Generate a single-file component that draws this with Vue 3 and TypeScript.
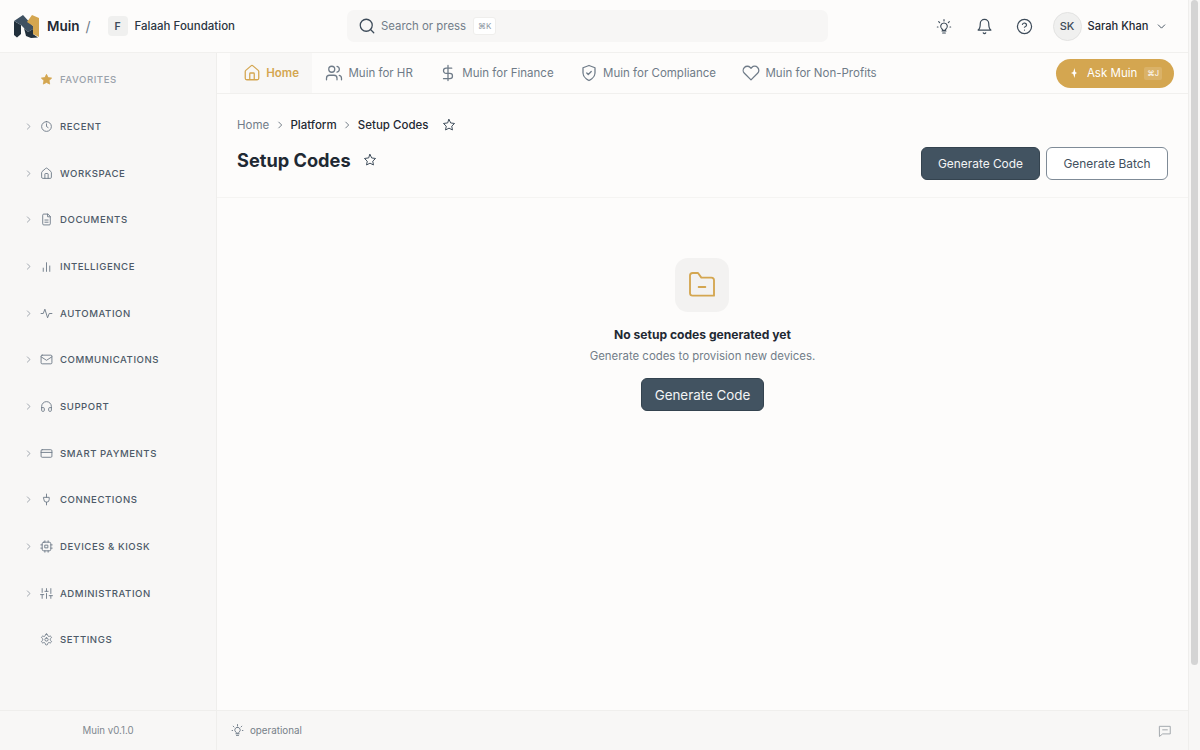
<script setup lang="ts">
const navItems = [
  { label: "RECENT", icon: "clock", arrow: true },
  { label: "WORKSPACE", icon: "home", arrow: true },
  { label: "DOCUMENTS", icon: "doc", arrow: true },
  { label: "INTELLIGENCE", icon: "bars", arrow: true },
  { label: "AUTOMATION", icon: "pulse", arrow: true },
  { label: "COMMUNICATIONS", icon: "mail", arrow: true },
  { label: "SUPPORT", icon: "headset", arrow: true },
  { label: "SMART PAYMENTS", icon: "card", arrow: true },
  { label: "CONNECTIONS", icon: "plug", arrow: true },
  { label: "DEVICES & KIOSK", icon: "chip", arrow: true },
  { label: "ADMINISTRATION", icon: "sliders", arrow: true },
  { label: "SETTINGS", icon: "gear", arrow: false },
]

const homePath = "M15 21v-8a1 1 0 0 0-1-1h-4a1 1 0 0 0-1 1v8M3 10a2 2 0 0 1 .7-1.500l7-6a2 2 0 0 1 2.600 0l7 6A2 2 0 0 1 21 10v9a2 2 0 0 1-2 2H5a2 2 0 0 1-2-2z"
const bulbPath = "M9 18h6M10 21h4M12 6a5 5 0 0 0-3 9c.6.500 1 1 1 2h4c0-1 .4-1.500 1-2a5 5 0 0 0-3-9zM12 1v2M4 4l1.500 1.500M20 4l-1.500 1.500M2 12h1M21 12h1"
const starPath = "M12 2.500l2.900 6 6.600.9-4.800 4.600 1.200 6.500L12 17.400l-5.900 3.100 1.200-6.500L2.500 9.400l6.600-.9z"

const icons: Record<string, string> = {
  clock: "M12 3a9 9 0 1 0 0 18 9 9 0 0 0 0-18zM12 7v5l3 2",
  home: homePath,
  doc: "M14 2H7a2 2 0 0 0-2 2v16a2 2 0 0 0 2 2h10a2 2 0 0 0 2-2V7zM14 2v5h5M9 13h6M9 17h6",
  bars: "M6 21v-6M12 21V5M18 21v-10",
  pulse: "M2 12h4l3-8 5 16 3-8h5",
  mail: "M4 4h16a2 2 0 0 1 2 2v12a2 2 0 0 1-2 2H4a2 2 0 0 1-2-2V6a2 2 0 0 1 2-2zM2 7l10 6.500L22 7",
  headset: "M3 14h3a2 2 0 0 1 2 2v3a2 2 0 0 1-2 2H5a2 2 0 0 1-2-2v-7a9 9 0 0 1 18 0v7a2 2 0 0 1-2 2h-1a2 2 0 0 1-2-2v-3a2 2 0 0 1 2-2h3",
  card: "M4 5h16a2 2 0 0 1 2 2v10a2 2 0 0 1-2 2H4a2 2 0 0 1-2-2V7a2 2 0 0 1 2-2zM2 10h20",
  plug: "M12 2v6M7 8h10v4a5 5 0 0 1-10 0zM12 17v5",
  chip: "M7 4h10a3 3 0 0 1 3 3v10a3 3 0 0 1-3 3H7a3 3 0 0 1-3-3V7a3 3 0 0 1 3-3zM9.500 9.500h5v5h-5zM9 1.500V4M15 1.500V4M9 20v2.500M15 20v2.500M1.500 9H4M1.500 15H4M20 9h2.500M20 15h2.500",
  sliders: "M4 21v-7M4 10V3M12 21v-9M12 8V3M20 21v-5M20 12V3M1 14h6M9 8h6M17 16h6",
  gear: "M12.220 2h-.44a2 2 0 0 0-2 2v.18a2 2 0 0 1-1 1.730l-.43.25a2 2 0 0 1-2 0l-.15-.08a2 2 0 0 0-2.730.73l-.22.38a2 2 0 0 0 .73 2.730l.15.1a2 2 0 0 1 1 1.720v.51a2 2 0 0 1-1 1.740l-.15.09a2 2 0 0 0-.73 2.730l.22.38a2 2 0 0 0 2.730.73l.15-.08a2 2 0 0 1 2 0l.43.25a2 2 0 0 1 1 1.730V20a2 2 0 0 0 2 2h.44a2 2 0 0 0 2-2v-.18a2 2 0 0 1 1-1.730l.43-.25a2 2 0 0 1 2 0l.15.08a2 2 0 0 0 2.730-.73l.22-.39a2 2 0 0 0-.73-2.730l-.15-.08a2 2 0 0 1-1-1.740v-.5a2 2 0 0 1 1-1.740l.15-.09a2 2 0 0 0 .73-2.730l-.22-.38a2 2 0 0 0-2.730-.73l-.15.08a2 2 0 0 1-2 0l-.43-.25a2 2 0 0 1-1-1.730V4a2 2 0 0 0-2-2zM12 9a3 3 0 1 0 0 6 3 3 0 0 0 0-6z",
}

const tabs = [
  { label: "Muin for HR", icon: "M16 21v-2a4 4 0 0 0-4-4H6a4 4 0 0 0-4 4v2M9 11a4 4 0 1 0 0-8 4 4 0 0 0 0 8zM22 21v-2a4 4 0 0 0-3-3.900M16 3.100a4 4 0 0 1 0 7.800" },
  { label: "Muin for Finance", icon: "M12 2v20M17 5.500H9.500a3.500 3.500 0 0 0 0 7h5a3.500 3.500 0 0 1 0 7H6" },
  { label: "Muin for Compliance", icon: "M12 22s8-3.500 8-10V5l-8-3-8 3v7c0 6.500 8 10 8 10zM9 12l2 2 4-4" },
  { label: "Muin for Non-Profits", icon: "M20.800 4.600a5.500 5.500 0 0 0-7.800 0L12 5.700l-1-1.100a5.500 5.500 0 0 0-7.800 7.800L12 21.200l8.800-8.800a5.500 5.500 0 0 0 0-7.800z" },
]
</script>

<template>
  <div class="page">
    <div class="shell">
      <header class="topbar">
        <div class="brand">
          <svg class="logo" viewBox="0 0 25 24" width="25" height="24">
            <path d="M0 7 7 11V20L3 23.500 0 21z" fill="#22303c" />
            <path d="M0 7 9 1 19 12V15L14 18 7 11z" fill="#3f5162" />
            <path d="M10 14 14 18 19 15V20L24 23.500 17 24 12 22z" fill="#22303c" />
            <path d="M13 8 18 1 25 4V23L19 20V12z" fill="#d4a650" />
          </svg>
          <span class="brand-name">Muin</span>
          <span class="brand-slash">/</span>
          <span class="org-badge">F</span>
          <span class="org-name">Falaah Foundation</span>
        </div>
        <div class="search">
          <svg viewBox="0 0 24 24" width="18" height="18" class="stroke dark"><circle cx="11" cy="11" r="8" /><path d="m21 21-4.300-4.300" /></svg>
          <span class="search-text">Search or press</span>
          <kbd class="search-key">⌘K</kbd>
        </div>
        <div class="top-actions">
          <svg viewBox="0 0 24 24" width="16" height="16" class="stroke dark bulb"><path :d="bulbPath" /></svg>
          <svg viewBox="0 0 24 24" width="17" height="17" class="stroke dark"><path d="M6 8a6 6 0 0 1 12 0c0 7 3 9 3 9H3s3-2 3-9M10.300 21a2 2 0 0 0 3.400 0" /></svg>
          <svg viewBox="0 0 24 24" width="17" height="17" class="stroke dark"><circle cx="12" cy="12" r="10" /><path d="M9.100 9a3 3 0 0 1 5.800 1c0 2-3 3-3 3M12 17h.01" /></svg>
          <div class="user">
            <span class="avatar">SK</span>
            <span class="user-name">Sarah Khan</span>
            <svg viewBox="0 0 24 24" width="13" height="13" class="stroke dark"><path d="m6 9 6 6 6-6" /></svg>
          </div>
        </div>
      </header>

      <div class="body">
        <aside class="sidebar">
          <nav class="side-nav">
            <div class="side-item">
              <span class="arrow"></span>
              <svg class="side-icon" viewBox="0 0 24 24" width="13" height="13"><path :d="starPath" fill="#d4a650" stroke="#d4a650" stroke-width="1.500" stroke-linejoin="round" /></svg>
              <span class="side-label fav">FAVORITES</span>
            </div>
            <div v-for="item in navItems" :key="item.label" class="side-item">
              <span class="arrow">
                <svg v-if="item.arrow" viewBox="0 0 24 24" width="9" height="9" class="stroke"><path d="m9 5 7 7-7 7" /></svg>
              </span>
              <svg class="side-icon stroke" viewBox="0 0 24 24" width="13" height="13"><path :d="icons[item.icon]" /></svg>
              <span class="side-label">{{ item.label }}</span>
            </div>
          </nav>
          <div class="version">Muin v0.1.0</div>
        </aside>

        <main class="main">
          <div class="tabbar">
            <div class="tab active">
              <svg viewBox="0 0 24 24" width="18" height="18" class="stroke"><path :d="homePath" /></svg>
              <span>Home</span>
            </div>
            <div v-for="tab in tabs" :key="tab.label" class="tab">
              <svg viewBox="0 0 24 24" width="18" height="18" class="stroke"><path :d="tab.icon" /></svg>
              <span>{{ tab.label }}</span>
            </div>
            <button class="ask">
              <svg viewBox="0 0 24 24" width="12" height="12"><path d="M13 2 10.500 10 6 12l4.500 2L13 22l1.500-8L18 12l-3.500-2z" fill="#fff" /></svg>
              <span>Ask Muin</span>
              <kbd class="ask-key">⌘J</kbd>
            </button>
          </div>

          <div class="page-head">
            <div class="crumbs">
              <span class="crumb-home">Home</span>
              <svg viewBox="0 0 24 24" width="10" height="10" class="stroke dark"><path d="m9 5 7 7-7 7" /></svg>
              <span>Platform</span>
              <svg viewBox="0 0 24 24" width="10" height="10" class="stroke dark"><path d="m9 5 7 7-7 7" /></svg>
              <span>Setup Codes</span>
              <svg viewBox="0 0 24 24" width="14" height="14" class="stroke dark crumb-star"><path :d="starPath" /></svg>
            </div>
            <div class="title-row">
              <div class="title">
                <h1>Setup Codes</h1>
                <svg viewBox="0 0 24 24" width="14" height="14" class="stroke dark"><path :d="starPath" /></svg>
              </div>
              <div class="title-actions">
                <button class="btn primary">Generate Code</button>
                <button class="btn outline">Generate Batch</button>
              </div>
            </div>
          </div>

          <section class="empty">
            <div class="empty-icon">
              <svg viewBox="0 0 24 24" width="32" height="32" class="stroke gold"><path d="M5 20a2 2 0 0 1-2-2V5a2 2 0 0 1 2-2h4l2.500 3.500H19a2 2 0 0 1 2 2V20zM9.500 13.500h5" /></svg>
            </div>
            <h2>No setup codes generated yet</h2>
            <p>Generate codes to provision new devices.</p>
            <button class="btn primary large">Generate Code</button>
          </section>

          <footer class="status">
            <div class="status-left">
              <svg viewBox="0 0 24 24" width="13" height="13" class="stroke"><path :d="bulbPath" /></svg>
              <span>operational</span>
            </div>
            <svg viewBox="0 0 24 24" width="14" height="14" class="stroke faint"><path d="M3 4h18v13H8l-5 4zM8 10h8" /></svg>
          </footer>
        </main>
      </div>
    </div>
    <div class="scrollbar"><div class="thumb"></div></div>
  </div>
</template>

<style scoped>
.page { display: flex; width: 1200px; height: 750px; overflow: hidden; background: #fdfcfb; color: #1f2933; font-family: "Inter", "Noto Sans", sans-serif; }
.shell { flex: 1; min-width: 0; display: flex; flex-direction: column; }
.stroke { fill: none; stroke: #6f7b88; stroke-width: 1.7; stroke-linecap: round; stroke-linejoin: round; flex: none; }
.stroke.dark { stroke: #3d4b59; }
.stroke.faint { stroke: #a3a8ad; }
.stroke.gold { stroke: #d4a650; stroke-width: 1.4; }

.topbar { height: 53px; flex: none; display: flex; align-items: center; box-sizing: border-box; border-bottom: 1px solid #f1f0ee; }
.brand { width: 347px; flex: none; display: flex; align-items: center; padding-left: 14px; box-sizing: border-box; }
.brand-name { font-size: 13.500px; font-weight: 600; margin-left: 8px; }
.brand-slash { font-size: 14px; color: #6f7b88; margin-left: 6px; }
.org-badge { width: 20px; height: 20px; border-radius: 4px; background: #f0f0ef; display: flex; align-items: center; justify-content: center; font-size: 10.500px; font-weight: 600; color: #3d4b59; margin-left: 17px; }
.org-name { font-size: 11.500px; font-weight: 500; margin-left: 7px; color: #2b3642; }
.search { width: 481px; height: 32px; flex: none; display: flex; align-items: center; gap: 5px; padding-left: 11px; box-sizing: border-box; background: #f7f6f5; border-radius: 7px; }
.search-text { font-size: 11.400px; color: #727d89; }
.search-key { font-family: inherit; font-size: 8px; color: #8a94a0; background: #fff; border: 1px solid #efeeec; border-radius: 3px; padding: 3px 4px; margin-left: 2px; }
.top-actions { flex: 1; display: flex; align-items: center; padding-left: 108px; gap: 23.500px; }
.bulb { margin-top: 2px; }
.user { display: flex; align-items: center; margin-left: -4px; }
.avatar { width: 29px; height: 29px; box-sizing: border-box; border-radius: 50%; background: #f0f0ef; border: 1px solid #e3e3e2; display: flex; align-items: center; justify-content: center; font-size: 11px; font-weight: 500; color: #3d4b59; }
.user-name { font-size: 11.100px; font-weight: 500; margin: 0 7px 0 6px; }

.body { flex: 1; min-height: 0; display: flex; }
.sidebar { width: 217px; flex: none; box-sizing: border-box; border-right: 1px solid #efeeec; background: #f8f7f6; display: flex; flex-direction: column; }
.side-nav { flex: 1; padding-top: 3.300px; }
.side-item { height: 46.700px; display: flex; align-items: center; padding-left: 24px; }
.arrow { width: 9px; height: 9px; display: flex; margin-right: 7px; }
.side-icon { margin-right: 7px; flex: none; }
.side-label { font-size: 9.600px; font-weight: 500; letter-spacing: .55px; color: #4d5a68; }
.side-label.fav { color: #9aa2ab; }
.version { height: 40px; flex: none; box-sizing: border-box; border-top: 1px solid #efeeec; display: flex; align-items: center; justify-content: center; font-size: 9.700px; color: #808890; }

.main { flex: 1; min-width: 0; display: flex; flex-direction: column; }
.tabbar { height: 41px; flex: none; box-sizing: border-box; border-bottom: 1px solid #f1f0ee; display: flex; align-items: center; padding-left: 13px; }
.tab { height: 40px; display: flex; align-items: center; gap: 5px; padding: 0 13.250px; font-size: 11.500px; color: #6f7b88; }
.tab.active { background: #f8f7f6; color: #d4a650; font-weight: 600; }
.tab.active .stroke { stroke: #d4a650; }
.ask { margin-left: auto; margin-right: 14px; width: 118px; height: 29px; border: none; border-radius: 15px; background: #d4a650; color: #fff; font: inherit; font-size: 11.500px; display: flex; align-items: center; justify-content: center; gap: 7px; }
.ask-key { font-family: inherit; font-size: 7.500px; background: rgba(255,255,255,.14); border-radius: 2px; padding: 2px 3px; }

.page-head { flex: none; height: 104px; box-sizing: border-box; border-bottom: 1px solid #f5f4f2; padding: 0 20px; }
.crumbs { display: flex; align-items: center; gap: 5.600px; height: 20px; margin-top: 21px; font-size: 11.500px; font-weight: 500; color: #1f2933; }
.crumb-home { color: #727d89; font-weight: 400; }
.crumb-star { margin-left: 7.500px; }
.title-row { display: flex; justify-content: space-between; margin-top: 9px; }
.title { display: flex; align-items: center; gap: 12px; height: 32px; }
h1 { font-size: 18.200px; font-weight: 700; margin: 0; }
.title-actions { display: flex; gap: 6px; margin-top: 3px; }
.btn { height: 33px; padding: 0 16px; border-radius: 6px; font: inherit; font-size: 11.900px; }
.btn.primary { background: #425361; border: 1px solid #34434f; color: #f3f4f5; }
.btn.outline { background: #fff; border: 1px solid #7f8b97; color: #42505e; padding: 0 16.500px; }
.btn.large { font-size: 13.400px; padding: 0 12.500px; }

.empty { flex: 1; display: flex; flex-direction: column; align-items: center; padding-top: 60px; }
.empty-icon { width: 54px; height: 54px; margin-right: 1px; border-radius: 13px; background: #f3f2f1; display: flex; align-items: center; justify-content: center; }
h2 { font-size: 12.100px; font-weight: 700; margin: 15px 0 0; }
.empty p { font-size: 11.400px; color: #727d89; margin: 7px 0 0; }
.empty .btn { margin-top: 15px; }

.status { height: 40px; flex: none; box-sizing: border-box; border-top: 1px solid #f0efed; background: #f8f7f6; display: flex; align-items: center; justify-content: space-between; padding: 0 16px 0 14px; }
.status-left { display: flex; align-items: center; gap: 6px; font-size: 9.800px; color: #767f88; }

.scrollbar { width: 12px; flex: none; background: #f8f7f6; border-left: 1px solid #efeeec; box-sizing: border-box; padding: 0 2px; }
.thumb { height: 665px; border-radius: 4px; background: #d4d4d4; }
</style>

<style>
html, body { margin: 0; background: #fdfcfb; }
</style>
